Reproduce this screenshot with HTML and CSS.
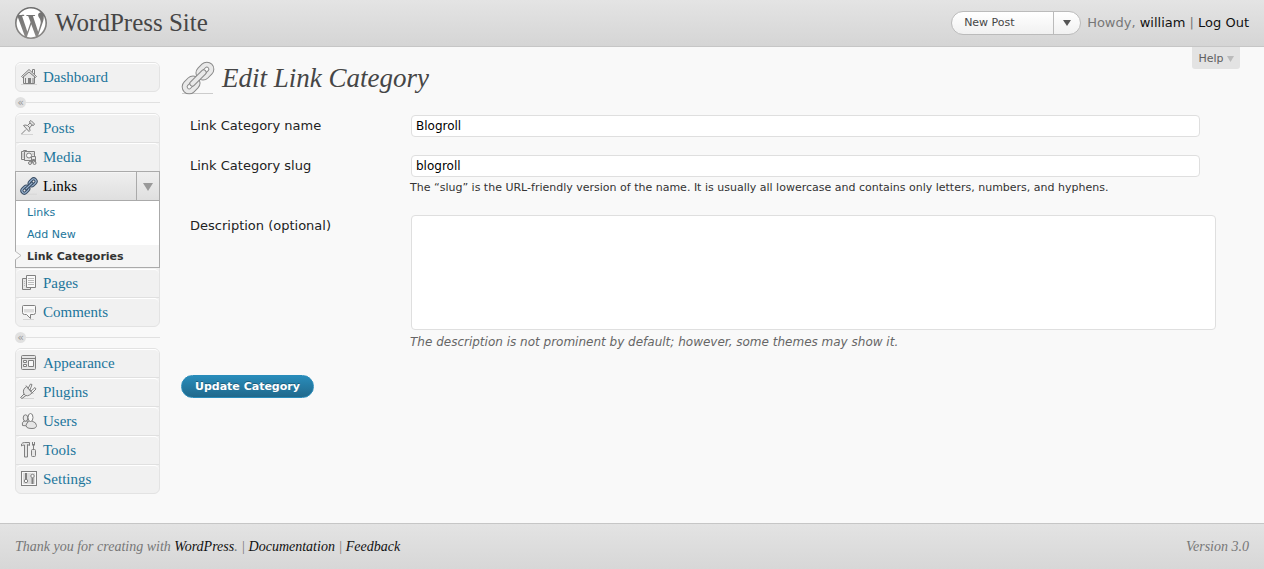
FILE: index.html
```html
<!DOCTYPE html>
<html lang="en">
<head>
<meta charset="utf-8">
<title>Edit Link Category - WordPress Site</title>
<link rel="stylesheet" href="styles.css">
</head>
<body>
<svg class="defs" aria-hidden="true">
  <defs>
    <linearGradient id="logo-fill" x1="0" y1="0" x2="0" y2="1"><stop offset="0" stop-color="#6c6c6c"/><stop offset="1" stop-color="#8c8a88"/></linearGradient>
    <symbol id="chain" viewBox="0 0 34 34">
      <path class="chain-ground" d="M1 32.500h31"/>
      <g transform="rotate(-45 17 17)">
        <rect class="chain-edge" x="19.500" y="12.500" width="14.500" height="9" rx="4.500"/>
        <rect class="chain-face" x="19.500" y="12.500" width="14.500" height="9" rx="4.500"/>
        <rect class="chain-edge" x="0" y="12.500" width="14.500" height="9" rx="4.500"/>
        <rect class="chain-face" x="0" y="12.500" width="14.500" height="9" rx="4.500"/>
        <path class="chain-edge" d="M9 17h16"/>
        <path class="chain-face" d="M9 17h16"/>
      </g>
    </symbol>
  </defs>
</svg>

<header class="site-header">
  <svg class="logo" viewBox="0 0 24 24" role="img" aria-label="WordPress"><circle cx="12" cy="12" r="11.500" fill="#fff"/><path fill="url(#logo-fill)" d="M21.469 6.825c.84 1.537 1.318 3.3 1.318 5.175 0 3.979-2.156 7.456-5.363 9.325l3.295-9.527c.615-1.54.82-2.771.82-3.864 0-.405-.026-.78-.07-1.11m-7.981.105c.647-.03 1.232-.105 1.232-.105.582-.075.514-.93-.067-.899 0 0-1.755.135-2.88.135-1.064 0-2.85-.15-2.85-.15-.585-.03-.661.855-.075.885 0 0 .54.061 1.125.09l1.68 4.605-2.37 7.08L5.354 6.9c.649-.03 1.234-.1 1.234-.1.585-.075.516-.93-.065-.896 0 0-1.746.138-2.874.138-.2 0-.438-.008-.69-.015C4.911 3.15 8.235 1.215 12 1.215c2.809 0 5.365 1.072 7.286 2.833-.046-.003-.091-.009-.141-.009-1.06 0-1.812.923-1.812 1.914 0 .89.513 1.643 1.06 2.531.411.72.89 1.643.89 2.977 0 .915-.354 1.994-.821 3.479l-1.075 3.585-3.9-11.61.001.014zM12 22.784c-1.059 0-2.081-.153-3.048-.437l3.237-9.406 3.315 9.087c.024.053.05.101.078.149-1.12.393-2.325.609-3.582.609M1.211 12c0-1.564.336-3.05.935-4.39L7.29 21.709C3.694 19.96 1.212 16.271 1.211 12M12 0C5.385 0 0 5.385 0 12s5.385 12 12 12 12-5.385 12-12S18.615 0 12 0"/></svg>
  <h1 class="site-title"><a href="#">WordPress Site</a></h1>
  <div class="favorites">
    <a class="favorites-link" href="#">New Post</a>
    <button class="favorites-toggle" type="button" aria-label="More actions"><svg class="arrow" viewBox="0 0 8 6"><path d="M0 0h8L4 6z"/></svg></button>
  </div>
  <p class="user-info">Howdy, <a href="#">william</a> | <a href="#">Log Out</a></p>
</header>

<div class="page">
  <nav class="menu" aria-label="Main menu">
    <ul class="menu-group">
      <li><a class="menu-item" href="#"><svg class="icon" viewBox="0 0 18 18"><path class="shade" d="M1 16.500h16"/><path class="soft" d="M3.500 8.500L9 3.500l5.500 5v7h-11z"/><path class="soft" d="M1.500 8.500L9 1.500l7.500 7-1 1L9 4 2.500 9.500z"/><path d="M12.500 4.500v-3h2v5"/><path class="solid" d="M8 10h3v6H8zM5 10h1v5H5zM12.500 10h1v5h-1z"/></svg>Dashboard</a></li>
    </ul>
    <div class="separator"><button type="button" aria-label="Collapse menu">«</button></div>
    <ul class="menu-group">
      <li><a class="menu-item" href="#"><svg class="icon" viewBox="0 0 18 18"><path class="shade" d="M1 15.500h12"/><path d="M6 10.500L1.500 15"/><path class="soft" d="M3.500 6.500l1.500-.5 2.500.5L10 4l-.5-1.500L11 1.500l3.500 3.500-1 1.500-1.500-.5-2.500 3 .5 2.500-1 1z"/><path d="M7.500 6.500L10 9M10 4l2.500 2"/></svg>Posts</a></li>
      <li><a class="menu-item" href="#"><svg class="icon" viewBox="0 0 18 18"><path class="soft" d="M1.500 3.500h2v-1h3v1h6v8h-11z"/><path class="soft" d="M4.500 3.500h10v9h-10z"/><path class="fine" d="M3 5v5M13 5v2"/><circle class="white" cx="9" cy="7.500" r="2.500"/><path class="soft" d="M11.500 14.500v-6h4v6h-1v-3h-2v3z"/><circle class="soft" cx="10" cy="15" r="1.500"/><circle class="soft" cx="14.500" cy="15" r="1.500"/></svg>Media</a></li>
      <li class="current">
        <div class="current-head">
          <a class="menu-item" href="#"><svg class="icon chain-blue"><use href="#chain"/></svg>Links</a>
          <button class="menu-toggle" type="button" aria-label="Toggle Links submenu"><svg viewBox="0 0 10 8"><path d="M0 0h10L5 8z"/></svg></button>
        </div>
        <ul class="submenu">
          <li><a href="#">Links</a></li>
          <li><a href="#">Add New</a></li>
          <li><a class="selected" href="#" aria-current="page"><svg class="pointer" viewBox="0 0 7 9"><path d="M0 0l6 4.500L0 9"/></svg>Link Categories</a></li>
        </ul>
      </li>
      <li><a class="menu-item" href="#"><svg class="icon" viewBox="0 0 18 18"><path class="soft" d="M2.500 4.500h8v11h-8z"/><path class="white" d="M6.500 1.500h9v12h-9z"/><path class="fine" d="M8 4.500h6M8 6.500h6M8 8.500h6M8 10.500h6M4 7.500h1M4 9.500h1M4 11.500h1"/></svg>Pages</a></li>
      <li><a class="menu-item" href="#"><svg class="icon" viewBox="0 0 18 18"><path class="shade" d="M3 16.500h11"/><path class="white" d="M3.500 2.500h11q1 0 1 1v6q0 2-2 2h-3v4l-4-4h-2q-2 0-2-2v-6q0-1 1-1z"/><path class="band" d="M4 6h10v3.500H4z"/></svg>Comments</a></li>
    </ul>
    <div class="separator"><button type="button" aria-label="Collapse menu">«</button></div>
    <ul class="menu-group">
      <li><a class="menu-item" href="#"><svg class="icon" viewBox="0 0 18 18"><rect class="soft" x="1.500" y="1.500" width="14" height="14" rx="1"/><path d="M2 4.500h13"/><path class="white" d="M3.500 6.500h3v2h-3zM3.500 10.500h3v2h-3zM8.500 6.500h5v6h-5z"/></svg>Appearance</a></li>
      <li><a class="menu-item" href="#"><svg class="icon" viewBox="0 0 18 18"><path class="shade" d="M2 15.500h12"/><path class="soft" d="M4.500 10.500l1.500 2-4 3-1.500-1z"/><path class="soft" d="M6.500 3.500q-4.500 3-2.500 7.500 3 4 8-1z"/><path class="white" d="M8 5.500l2.500-4.500 1.500.5-2 5.500M10.500 8.500l4.500-4 1 1.500-4 4"/><path d="M6 2.500l7 8"/></svg>Plugins</a></li>
      <li><a class="menu-item" href="#"><svg class="icon" viewBox="0 0 18 18"><path class="soft" d="M2.500 13.500q-1-3 1.500-4.500h4v5z"/><ellipse class="soft" cx="5.500" cy="6" rx="2.300" ry="3.200"/><path class="soft" d="M7 15.500q-2-2 0-4.500 1.500-1.500 2.500-2h2.500q4.500 1.500 4.500 4.500 0 3-4.500 3-3.500 0-5-1z"/><ellipse class="white" cx="10.500" cy="5.500" rx="2.500" ry="4"/></svg>Users</a></li>
      <li><a class="menu-item" href="#"><svg class="icon" viewBox="0 0 18 18"><path class="soft" d="M1.500 5V3q1-1.500 3-1.500h5v3l-2-1v12.500h-3V4q-2 0-3 1z"/><path class="solid" d="M12 1h1v2h1V1h1v3l-1 1v4h-1V5l-1-1z"/><rect class="soft" x="11.500" y="8.500" width="4" height="7" rx="1"/></svg>Tools</a></li>
      <li><a class="menu-item" href="#"><svg class="icon" viewBox="0 0 18 18"><rect class="white" x="1.500" y="1.500" width="15" height="14"/><path class="band" d="M3 3h12v11H3z"/><path class="solid" d="M5 3h2v7H5zM11.500 8h2v6h-2z"/><circle class="white" cx="6" cy="11" r="1.700"/><circle class="white" cx="12.500" cy="6" r="1.700"/></svg>Settings</a></li>
    </ul>
  </nav>

  <main class="content">
    <button class="help" type="button">Help <svg viewBox="0 0 7 6"><path d="M0 0h7L3.500 6z"/></svg></button>
    <h2 class="heading"><svg class="heading-icon"><use href="#chain"/></svg>Edit Link Category</h2>
    <form class="edit-form">
      <div class="row">
        <label for="name">Link Category name</label>
        <div class="field"><input id="name" type="text" value="Blogroll"></div>
      </div>
      <div class="row">
        <label for="slug">Link Category slug</label>
        <div class="field"><input id="slug" type="text" value="blogroll">
          <p class="note">The “slug” is the URL-friendly version of the name. It is usually all lowercase and contains only letters, numbers, and hyphens.</p></div>
      </div>
      <div class="row">
        <label for="description">Description (optional)</label>
        <div class="field"><textarea id="description"></textarea>
          <p class="hint">The description is not prominent by default; however, some themes may show it.</p></div>
      </div>
      <button class="submit" type="submit">Update Category</button>
    </form>
  </main>
</div>

<footer class="site-footer">
  <p>Thank you for creating with <a href="#">WordPress</a>. | <a href="#">Documentation</a> | <a href="#">Feedback</a></p>
  <p>Version 3.0</p>
</footer>
</body>
</html>
```

FILE: styles.css
```css
:root {
  --sans: Verdana, "DejaVu Sans", sans-serif;
  --serif: Georgia, "Liberation Serif", serif;
  --blue: #21759b;
}
* { box-sizing: border-box; }
body {
  margin: 0;
  min-height: 100vh;
  display: flex;
  flex-direction: column;
  background: #f9f9f9;
  color: #333;
  font: 12px/18px var(--sans);
}
a { color: var(--blue); text-decoration: none; }
ul, p, h1, h2 { margin: 0; padding: 0; list-style: none; font-weight: normal; }
button { font-family: inherit; cursor: pointer; }
.defs { position: absolute; width: 0; height: 0; }

.site-header {
  display: flex;
  align-items: center;
  height: 47px;
  padding: 0 15px;
  border-bottom: 1px solid #c6c6c6;
  background: linear-gradient(#e4e4e4, #d5d5d5);
}
.logo { width: 32px; height: 32px; }
.site-title { flex: 1; margin-left: 8px; font: 25px/30px var(--serif); }
.site-title a { color: #464646; }
.favorites {
  display: flex;
  width: 130px;
  height: 24px;
  border: 1px solid #bbb;
  border-radius: 12px;
  background: linear-gradient(#fff, #f1f1f1);
}
.favorites-link { flex: 1; padding-left: 12px; color: #464646; font-size: 11px; line-height: 22px; }
.favorites-toggle {
  display: grid;
  place-items: center;
  width: 27px;
  padding: 0;
  border: 0;
  border-left: 1px solid #bbb;
  background: none;
}
.arrow { width: 8px; height: 6px; fill: #555; }
.user-info { margin-left: 6px; color: #777; font-size: 13px; }
.user-info a { color: #111; }

.page { display: flex; flex: 1; padding-right: 24px; }
.menu { width: 145px; margin: 15px 21px 29px 15px; flex: none; }
.menu-group { border: 1px solid #e3e3e3; border-radius: 6px; background: #f1f1f1; }
.menu-group > li + li { border-top: 1px solid #e0e0e0; }
.menu-item {
  display: flex;
  align-items: center;
  height: 28px;
  padding: 0 0 2px 4px;
  gap: 5px;
  border-top: 1px solid #fff;
  border-radius: 5px 5px 0 0;
  font: 15px/20px var(--serif);
}
.icon {
  width: 18px;
  height: 18px;
  fill: none;
  stroke: #808080;
  stroke-width: 1;
}
.soft { fill: #e6e6e6; }
.white { fill: #f9f9f9; }
.band { fill: #dcdcdc; stroke: none; }
.solid { fill: #808080; stroke: none; }
.shade { stroke: #d4d4d4; }
.fine { stroke: #bbb; }
.separator { display: flex; align-items: center; height: 21px; }
.separator::after { content: ""; flex: 1; height: 1px; background: #e1e1e1; }
.separator button {
  width: 11px;
  height: 11px;
  padding: 0;
  border: 0;
  border-radius: 50%;
  background: #e1e1e1;
  color: #999;
  font: 11px/9px var(--sans);
}
.menu-group > .current { margin: 0 -1px; border: 1px solid #aaa; background: #fff; }
.menu-group > .current + li { border-top-color: #f1f1f1; }
.current-head {
  display: flex;
  border-bottom: 1px solid #aaa;
  background: linear-gradient(#efefef, #dfdfdf);
}
.current-head .menu-item { flex: 1; border-radius: 0; color: #000; border-top-color: #f5f5f5; }
.menu-toggle {
  display: grid;
  place-items: center;
  width: 23px;
  padding: 2px 0 0;
  border: 0;
  border-left: 1px solid #aaa;
  background: none;
}
.menu-toggle svg { width: 10px; height: 8px; fill: #999; }
.submenu a { display: block; position: relative; padding: 1px 0 0 11px; font-size: 11px; line-height: 21px; }
.submenu .selected { background: #f5f5f5; color: #333; font-weight: bold; }
.pointer { position: absolute; left: -1px; top: 6px; width: 7px; height: 9px; fill: #f9f9f9; stroke: #bbb; }

.chain-ground { stroke: #ccc; stroke-width: 1; }
.chain-edge, .chain-face { fill: none; stroke-linecap: round; }
.chain-edge { stroke: var(--chain-edge, #8a8a8a); stroke-width: var(--chain-edge-width, 6px); }
.chain-face { stroke: var(--chain-face, #e9e9e9); stroke-width: var(--chain-face-width, 4px); }
.chain-blue {
  --chain-edge: #3c4f66;
  --chain-face: #9db8d6;
  --chain-edge-width: 6px;
  --chain-face-width: 2px;
}

.content { position: relative; flex: 1; min-width: 0; }
.help {
  position: absolute;
  top: 0;
  right: 0;
  height: 22px;
  padding: 0 6px;
  border: 0;
  border-radius: 0 0 3px 3px;
  background: #e3e3e3;
  color: #606060;
  font-size: 11px;
}
.help svg { width: 7px; height: 6px; fill: #bbb; }
.heading {
  display: flex;
  align-items: center;
  gap: 7px;
  padding-top: 13px;
  color: #464646;
  font: italic 27px/36px var(--serif);
}
.heading-icon { width: 34px; height: 34px; }
.edit-form { padding-top: 19px; }
.row { display: grid; grid-template-columns: 220px 1fr; padding: 0 0 18px 9px; }
.row label { color: #222; font-size: 13px; line-height: 22px; }
.field { min-width: 0; }
.field input, .field textarea {
  display: block;
  margin: 0 1px;
  border: 1px solid #dfdfdf;
  border-radius: 4px;
  background: #fff;
  color: #000;
  font: 12px/18px var(--sans);
}
.field input { width: 95%; height: 22px; padding: 2px 4px; }
.field textarea { width: 97%; height: 115px; padding: 4px; resize: none; }
.note { padding-top: 2px; font-size: 11px; }
.hint { padding-top: 3px; color: #666; font-style: italic; }
.submit {
  display: block;
  height: 23px;
  margin-top: 6px;
  padding: 0 13px;
  border: 1px solid #298cba;
  border-radius: 12px;
  background: linear-gradient(#298cba, #21698c);
  color: #fff;
  font: bold 11px/20px var(--sans);
  text-shadow: 0 -1px 0 rgba(0, 0, 0, .3);
}

.site-footer {
  display: flex;
  justify-content: space-between;
  align-items: center;
  height: 46px;
  padding: 0 15px;
  border-top: 1px solid #c6c6c6;
  background: linear-gradient(#e3e3e3, #d7d7d7);
  color: #777;
  font: italic 14px/18px var(--serif);
}
.site-footer a { color: #111; }
```
